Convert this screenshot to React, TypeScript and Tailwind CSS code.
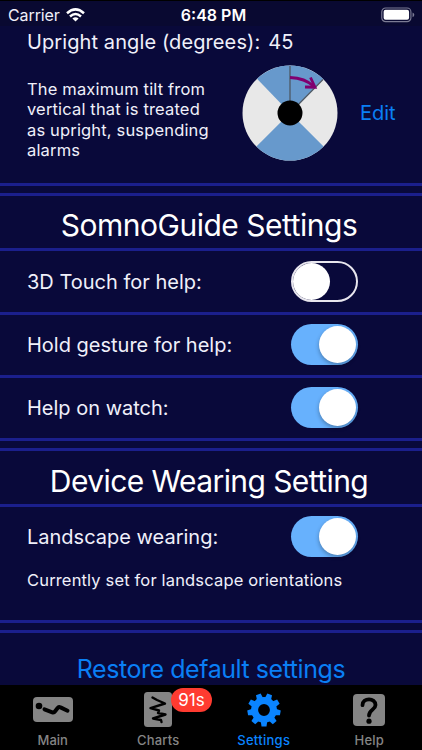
import React from 'react';

interface ToggleProps {
  on?: boolean;
}

function Toggle({ on }: ToggleProps) {
  return on ? (
    <div className="flex h-[41px] w-[67px] items-center justify-end rounded-full bg-[#67b1fd] pr-[2px]">
      <div className="h-[37px] w-[37px] rounded-full bg-white shadow-[0_2px_4px_rgba(0,0,0,0.3)]" />
    </div>
  ) : (
    <div className="flex h-[41px] w-[67px] items-center rounded-full border-2 border-[#e8e6ee]">
      <div className="h-[37px] w-[37px] rounded-full bg-white" />
    </div>
  );
}

function Line() {
  return <div className="h-[3px] shrink-0 bg-[#1b1f8c]" />;
}

interface SettingRowProps {
  label: string;
  on?: boolean;
  className: string;
}

function SettingRow({ label, on, className }: SettingRowProps) {
  return (
    <div className={`flex shrink-0 items-center justify-between pr-16 pl-[27px] ${className}`}>
      <span className="pt-px text-[20px] whitespace-nowrap">{label}</span>
      <Toggle on={on} />
    </div>
  );
}

function AngleDial() {
  return (
    <svg width="96" height="96" viewBox="-48 -48 96 96" className="shrink-0">
      <circle r="47.5" fill="#e8e8e8" />
      <path d="M0 0L-33 -34.2A47.5 47.5 0 0 1 33 -34.2Z" fill="#6799cc" />
      <path d="M0 0L-33.6 33.6A47.5 47.5 0 0 0 33.6 33.6Z" fill="#6799cc" />
      <path d="M0 0V-47M0 0L33 -33.5" stroke="#4d5966" strokeWidth="1.3" />
      <path d="M0 -35.5Q15 -35 24 -26.5" fill="none" stroke="#800070" strokeWidth="2.8" />
      <path d="M20.5 -35.5L25 -25.8L15 -26" fill="none" stroke="#800070" strokeWidth="2.8" />
      <circle r="12.5" fill="#000" />
    </svg>
  );
}

function MainIcon() {
  return (
    <svg width="40" height="25" viewBox="0 0 40 25">
      <rect width="40" height="25" rx="4" fill="#858585" />
      <circle cx="6" cy="9" r="3.3" fill="#000" />
      <path d="M11.5 12.3L19.3 15.3Q21 15.8 22.3 14L24.8 10.8Q26 9.6 27.5 10.4L34.5 13.7" fill="none" stroke="#000" strokeWidth="4" strokeLinecap="round" strokeLinejoin="round" />
    </svg>
  );
}

function ChartsIcon() {
  return (
    <svg width="28" height="35" viewBox="0 0 28 35">
      <rect width="28" height="35" rx="3.5" fill="#858585" />
      <path d="M8.5 5.5L13 8L21 11.5L6.5 16.2L15 18.5L14 21L21.5 22.5L9 26.5L17 28L17.5 30" fill="none" stroke="#000" strokeWidth="2.4" strokeLinecap="round" strokeLinejoin="round" />
    </svg>
  );
}

const teeth = [10, 50, 90, 130, 170, 210, 250, 290, 330];

function GearIcon() {
  return (
    <svg width="34" height="34" viewBox="-17 -17 34 34">
      <circle r="9.4" fill="none" stroke="#0a84ff" strokeWidth="7" />
      {teeth.map((a) => (
        <path key={a} d="M11.5 -3.2L16.6 -2.5V2.5L11.5 3.2Z" fill="#0a84ff" transform={`rotate(${a})`} />
      ))}
    </svg>
  );
}

function HelpIcon() {
  return (
    <svg width="32" height="32" viewBox="0 0 32 32">
      <rect width="32" height="32" rx="4" fill="#858585" />
      <path d="M9.5 11.2C9.5 3.4 22.5 3.4 22.5 11C22.5 15.5 16 16 16 21.5" fill="none" stroke="#000" strokeWidth="3.8" strokeLinecap="round" />
      <circle cx="16" cy="27.2" r="2.6" fill="#000" />
    </svg>
  );
}

interface TabProps {
  label: string;
  active?: boolean;
  badge?: string;
  labelClass: string;
  children: React.ReactNode;
}

function Tab({ label, active, badge, labelClass, children }: TabProps) {
  return (
    <div className="relative flex flex-1 flex-col items-center">
      <div className="flex h-[47px] items-center pt-[2px]">{children}</div>
      <span className={`text-[13px] leading-4 font-medium ${labelClass} ${active ? 'text-[#0a84ff]' : 'text-[#858585]'}`}>
        {label}
      </span>
      {badge && (
        <span className="absolute top-[3px] left-[65.5px] flex h-6 w-[41px] items-center justify-center rounded-full bg-[#ff3b30] pt-px text-[17px] text-white">
          {badge}
        </span>
      )}
    </div>
  );
}

export default function App() {
  return (
    <div className="flex h-[750px] w-[422px] flex-col overflow-hidden bg-[#09093a] font-['Inter','Liberation_Sans',sans-serif] text-[#f0f0fa]">
      {/* Status bar */}
      <div className="grid h-[26px] shrink-0 grid-cols-3 items-center border-t border-black bg-[#090931] pt-[2px] pr-[7px] pl-[8px]">
        <div className="flex items-center gap-[6px]">
          <span className="text-[16px] leading-5 tracking-[-0.1px]">Carrier</span>
          <svg width="19" height="14" viewBox="0 0 19 14" fill="none" stroke="#fff" strokeWidth="2.5">
            <path d="M1 5.2Q9.5 -2.5 18 5.2" />
            <path d="M4 8.5Q9.5 3.6 15 8.5" />
            <path d="M9.5 13.5L6.4 10.5Q9.5 7.8 12.6 10.5Z" fill="#fff" stroke="none" />
          </svg>
        </div>
        <span className="pl-[4px] text-center text-[16px] leading-5 font-semibold whitespace-nowrap text-white">6:48 PM</span>
        <svg width="34" height="16" viewBox="0 0 35 16" className="justify-self-end">
          <rect x="0.8" y="0.8" width="30" height="14" rx="4" fill="none" stroke="#7b7b94" strokeWidth="1.2" />
          <rect x="2.7" y="2.7" width="26.2" height="10.2" rx="2" fill="#fff" />
          <path d="M32.5 5.3Q34.3 6 34.3 7.8Q34.3 9.6 32.5 10.3Z" fill="#7b7b94" />
        </svg>
      </div>

      {/* Upright angle */}
      <div className="flex h-[157px] shrink-0 flex-col pl-[27px]">
        <p className="mt-[3px] text-[20px] leading-[26px] tracking-[0.1px] whitespace-pre">
          Upright angle (degrees):<span className="ml-[8px]">45</span>
        </p>
        <div className="mt-[9px] flex items-center">
          <p className="mt-[16px] -translate-y-px w-[215px] text-[16.5px] leading-[20.4px] tracking-[0.16px] whitespace-nowrap">
            The maximum tilt from
            <br />
            vertical that is treated
            <br />
            as upright, suspending
            <br />
            alarms
          </p>
          <AngleDial />
          <span className="ml-[22px] text-[20px] text-[#0a7ff5]">Edit</span>
        </div>
      </div>
      <Line />
      <div className="h-[7px] shrink-0" />
      <Line />

      {/* SomnoGuide */}
      <h2 className="flex h-[52px] shrink-0 items-center justify-center pt-[6px] pr-[4px] text-[30px] tracking-[-0.48px] whitespace-nowrap text-white">
        SomnoGuide Settings
      </h2>
      <Line />
      <SettingRow label="3D Touch for help:" className="h-[61px] pb-px" />
      <Line />
      <SettingRow label="Hold gesture for help:" on className="h-[60px] pb-[2px]" />
      <Line />
      <SettingRow label="Help on watch:" on className="h-[60px] pb-[2px]" />
      <Line />
      <div className="h-[7px] shrink-0" />
      <Line />

      {/* Device wearing */}
      <h2 className="flex h-[53px] shrink-0 items-center justify-center pt-[7px] pr-[4px] text-[30px] tracking-[-0.58px] whitespace-nowrap text-white">
        Device Wearing Setting
      </h2>
      <Line />
      <div className="h-[113px] shrink-0">
        <SettingRow label="Landscape wearing:" on className="h-[59px]" />
        <p className="pt-[4px] pl-[27px] text-[16.5px] leading-[20px] tracking-[0.16px] whitespace-nowrap">
          Currently set for landscape orientations
        </p>
      </div>
      <Line />
      <div className="h-[7px] shrink-0" />
      <Line />
      <div className="flex h-[52px] shrink-0 items-end justify-center text-[25px] leading-[32px] tracking-[-0.45px] whitespace-nowrap text-[#0a7ff5]">
        Restore default settings
      </div>

      {/* Tab bar */}
      <div className="flex h-[65px] shrink-0 bg-black">
        <Tab label="Main" labelClass="tracking-[0px]">
          <MainIcon />
        </Tab>
        <Tab label="Charts" badge="91s" labelClass="tracking-[0.2px]">
          <ChartsIcon />
        </Tab>
        <Tab label="Settings" active labelClass="tracking-[0.3px]">
          <GearIcon />
        </Tab>
        <Tab label="Help" labelClass="tracking-[0.2px]">
          <HelpIcon />
        </Tab>
      </div>
    </div>
  );
}
